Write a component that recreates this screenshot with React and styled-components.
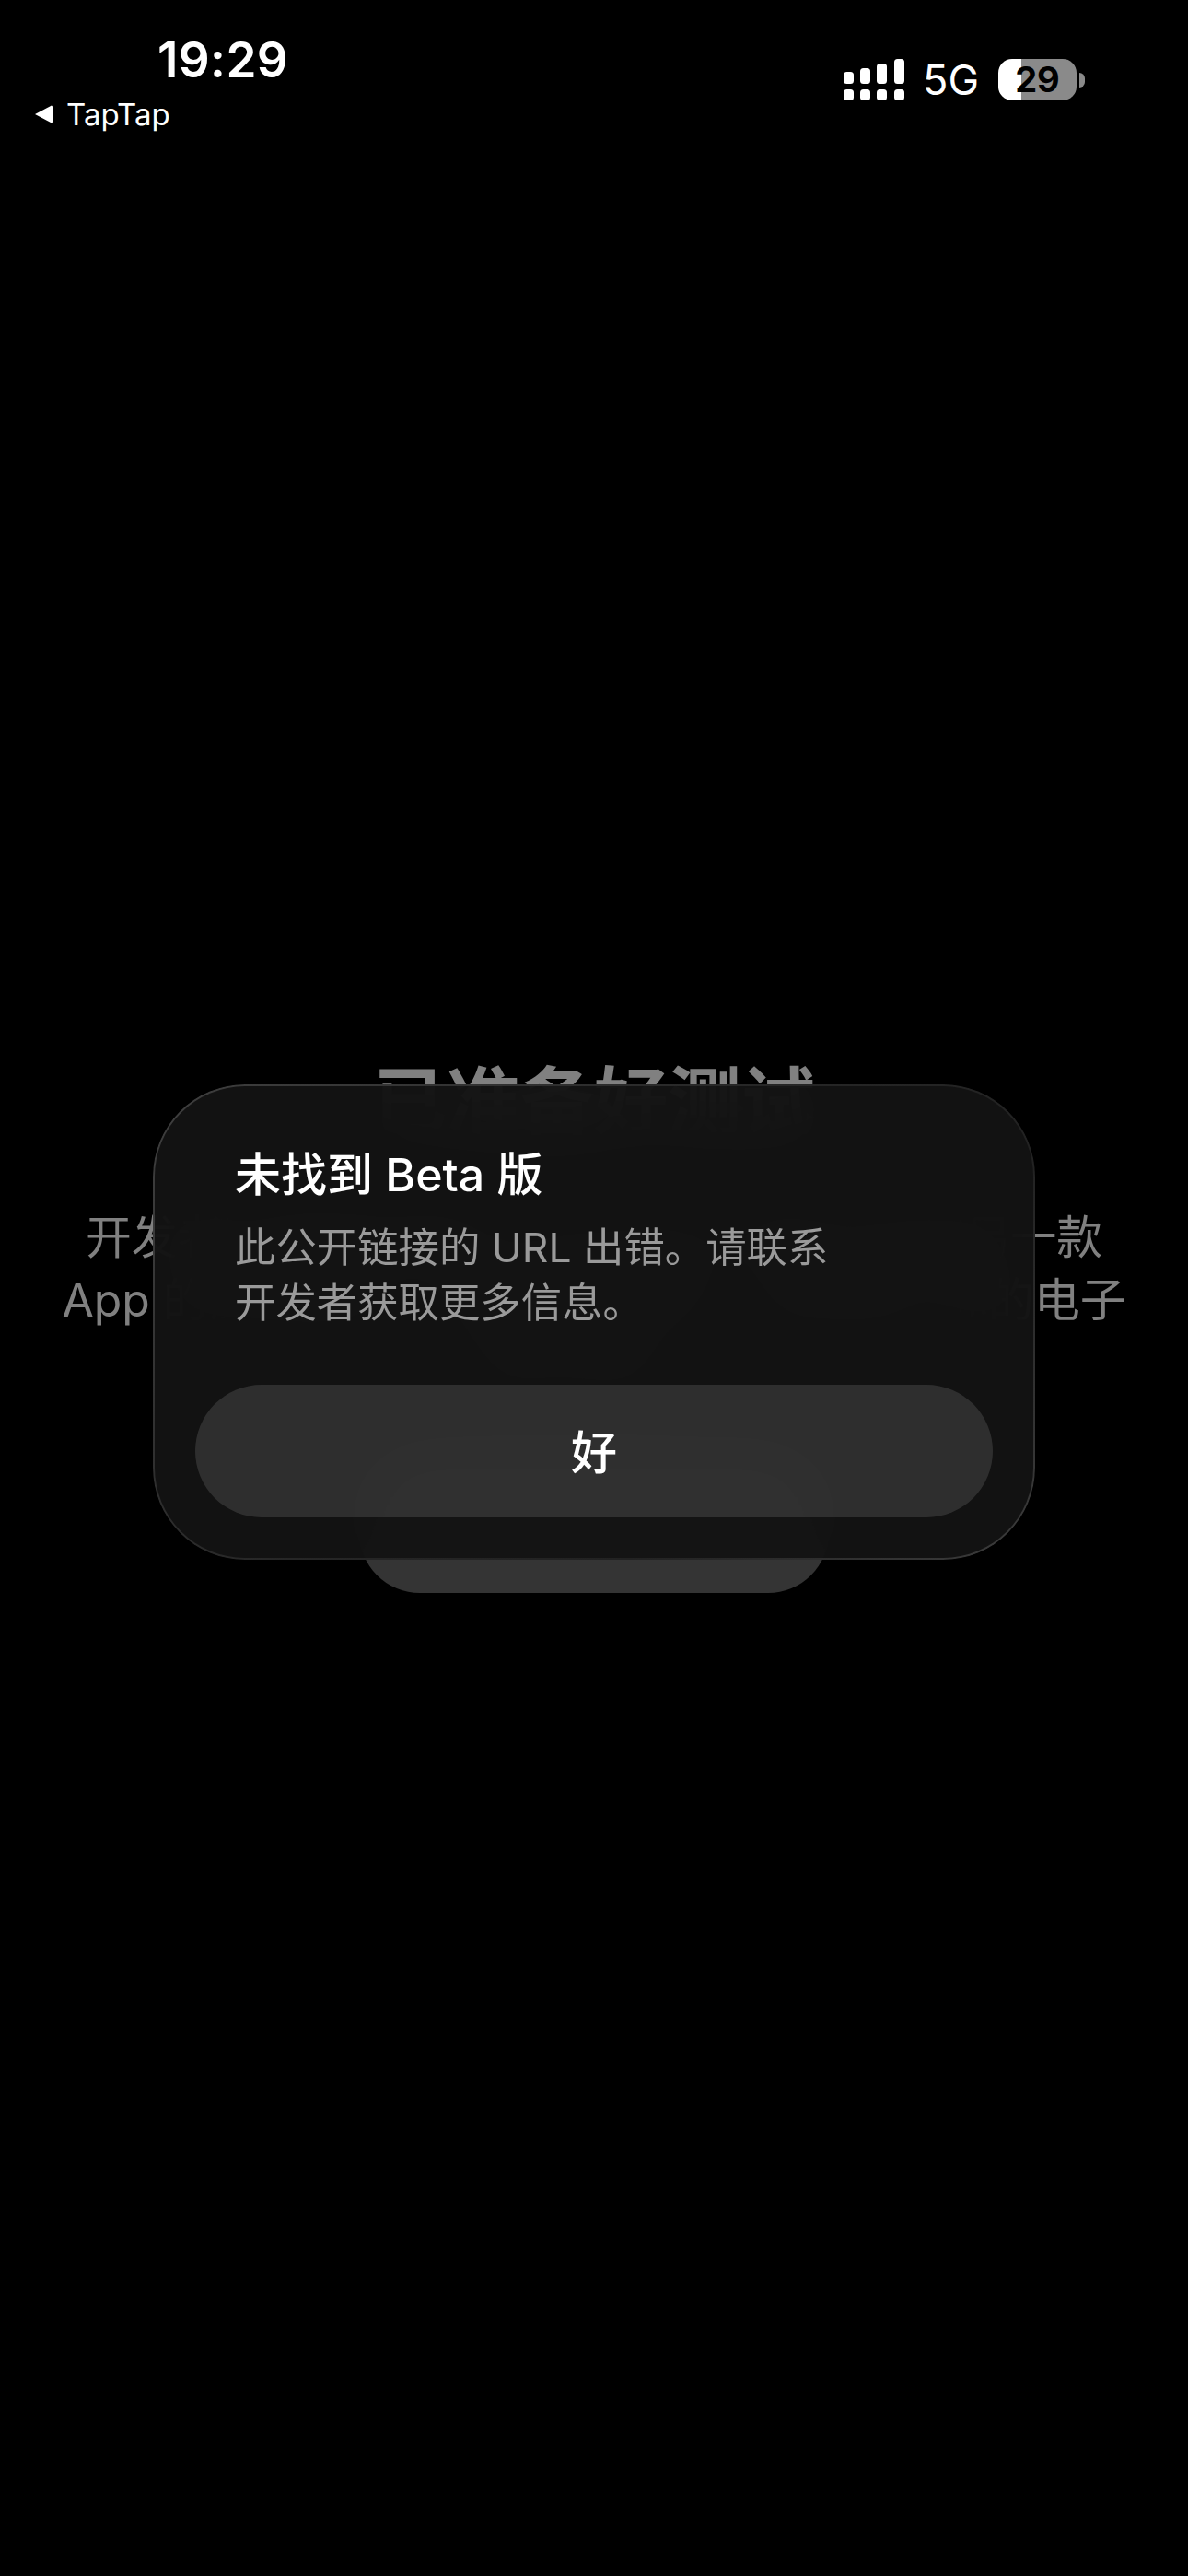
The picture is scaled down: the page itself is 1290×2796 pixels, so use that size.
import React from "react";
import styled, { createGlobalStyle } from "styled-components";

const Global = createGlobalStyle`
  html, body { margin: 0; padding: 0; background: #000; }
  body { font-family: Inter, "Noto Sans CJK SC", sans-serif; }
  * { box-sizing: border-box; }
`;

const Page = styled.div`
  position: relative;
  width: 1290px;
  height: 2796px;
  background: #000;
  overflow: hidden;
`;

const StatusBar = styled.header`
  height: 150px;
  display: flex;
  justify-content: space-between;
  align-items: flex-start;
  padding: 0 112px 0 37px;
`;

const LeftStatus = styled.div`
  display: flex;
  flex-direction: column;
  padding-top: 35px;
`;

const Time = styled.div`
  margin-left: 134px;
  color: #fff;
  font: 600 53px/60px Inter, sans-serif;
  letter-spacing: 0.4px;
`;

const BackLink = styled.div`
  display: flex;
  align-items: center;
  gap: 13px;
  margin-top: 9px;
  color: #fff;
  font: 400 33px/40px Inter, sans-serif;
`;

const RightStatus = styled.div`
  display: flex;
  align-items: center;
  margin-top: 64px;
  height: 45px;
`;

const Network = styled.span`
  margin-left: 20px;
  color: #fff;
  font: 400 45px/45px Inter, sans-serif;
`;

const Battery = styled.div`
  position: relative;
  margin-left: 21px;
  width: 85px;
  height: 45px;
  border-radius: 15px;
  overflow: hidden;
  background: linear-gradient(to right, #fff 0 25px, #8a8a8a 25px 100%);
  display: flex;
  align-items: center;
  justify-content: center;
  color: #000;
  font: 700 38px/45px Inter, sans-serif;
`;

const BatteryNub = styled.div`
  width: 6px;
  height: 16px;
  margin-left: 3px;
  background: #8a8a8a;
  border-radius: 0 6px 6px 0;
`;

const Backdrop = styled.main`
  display: flex;
  flex-direction: column;
  align-items: center;
  padding-top: 995px;
  color: #808080;
  font-family: Inter, "Noto Sans CJK SC", sans-serif;
`;

const BackdropTitle = styled.h1`
  margin: 0;
  font-size: 80px;
  line-height: 100px;
  font-weight: 700;
`;

const BackdropText = styled.p`
  margin: 64px 0 0;
  width: 1250px;
  text-align: center;
  font-size: 49.8px;
  line-height: 68px;
  font-weight: 400;
`;

const BackdropButton = styled.div`
  margin-top: 58px;
  width: 510px;
  height: 158px;
  border-radius: 66px;
  background: #343434;
`;

const Dialog = styled.section`
  position: absolute;
  left: 166px;
  top: 1177px;
  width: 958px;
  height: 516px;
  border-radius: 100px;
  padding: 62px 46px 46px;
  background: rgba(19, 19, 19, 0.95);
  backdrop-filter: blur(34px);
  display: flex;
  flex-direction: column;

  &::before {
    content: "";
    position: absolute;
    inset: 0;
    border-radius: inherit;
    padding: 2px;
    background: linear-gradient(135deg, #3f3f3f 0%, #262626 45%, #222 70%, #3c3c3c 100%);
    -webkit-mask: linear-gradient(#000 0 0) content-box, linear-gradient(#000 0 0);
    -webkit-mask-composite: xor;
    mask-composite: exclude;
  }
`;

const DialogCopy = styled.div`
  padding: 0 43px;
  flex: 1;
`;

const DialogTitle = styled.h2`
  margin: 0;
  color: #fff;
  font: 500 50px/72px Inter, "Noto Sans CJK SC", sans-serif;
`;

const DialogBody = styled.p`
  margin: 13px 0 0;
  width: 670px;
  color: #9a9a9a;
  font: 400 44.4px/60px Inter, "Noto Sans CJK SC", sans-serif;
`;

const OkButton = styled.button`
  height: 144px;
  border: 0;
  padding: 0 0 5px;
  border-radius: 72px;
  background: rgba(255, 255, 255, 0.12);
  color: #fff;
  font: 500 50px/1 "Noto Sans CJK SC", sans-serif;
`;

const Signal = () => (
  <svg width="66" height="45" viewBox="0 0 66 45" fill="#fff" aria-hidden="true">
    <rect x="0" y="14" width="11" height="13" rx="3.5" />
    <rect x="18" y="10" width="11" height="17" rx="3.5" />
    <rect x="36" y="5" width="11" height="22" rx="3.5" />
    <rect x="55" y="0" width="11" height="27" rx="3.5" />
    <rect x="0" y="33" width="11" height="12" rx="3.5" />
    <rect x="18" y="33" width="11" height="12" rx="3.5" />
    <rect x="36" y="33" width="11" height="12" rx="3.5" />
    <rect x="55" y="33" width="11" height="12" rx="3.5" />
  </svg>
);

const BackArrow = () => (
  <svg width="22" height="22" viewBox="0 0 22 22" aria-hidden="true">
    <path d="M1 11 L19 1.5 Q21 1 21 3 V19 Q21 21 19 20.5 Z" fill="#fff" />
  </svg>
);

export default function App() {
  return (
    <Page>
      <Global />
      <StatusBar>
        <LeftStatus>
          <Time>19:29</Time>
          <BackLink>
            <BackArrow />
            TapTap
          </BackLink>
        </LeftStatus>
        <RightStatus>
          <Signal />
          <Network>5G</Network>
          <Battery>29</Battery>
          <BatteryNub />
        </RightStatus>
      </StatusBar>
      <Backdrop>
        <BackdropTitle>已准备好测试</BackdropTitle>
        <BackdropText>
          开发者已邀请你通过 TestFlight 来参与测试另一款
          <br />
          App 的测试版本。如要开始测试，请先输入你的电子
          <br />
          邮件地址。
        </BackdropText>
        <BackdropButton />
      </Backdrop>
      <Dialog>
        <DialogCopy>
          <DialogTitle>未找到 Beta 版</DialogTitle>
          <DialogBody>此公开链接的 URL 出错。请联系开发者获取更多信息。</DialogBody>
        </DialogCopy>
        <OkButton>好</OkButton>
      </Dialog>
    </Page>
  );
}
